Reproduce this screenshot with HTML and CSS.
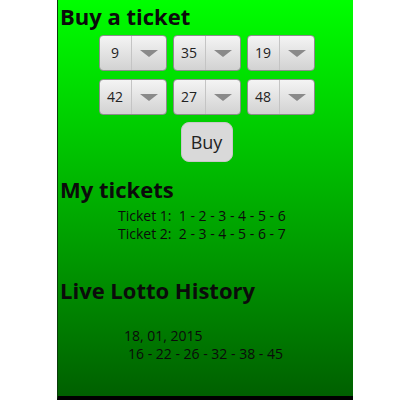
FILE: index.html
```html
<!DOCTYPE html>
<html>

<head>
    <title>Lotto</title>
    <link rel="stylesheet" href="styles.css">
</head>

<body>
    <div class="screen">
        <h2 class="section-title">Buy a ticket</h2>
        <div class="picker">
            <div class="spinner"><span class="value">9</span><span class="arrow"></span></div>
            <div class="spinner"><span class="value">35</span><span class="arrow"></span></div>
            <div class="spinner"><span class="value">19</span><span class="arrow"></span></div>
            <div class="spinner"><span class="value">42</span><span class="arrow"></span></div>
            <div class="spinner"><span class="value">27</span><span class="arrow"></span></div>
            <div class="spinner"><span class="value">48</span><span class="arrow"></span></div>
        </div>
        <div class="actions">
            <button class="buy">Buy</button>
        </div>

        <h2 class="section-title">My tickets</h2>
        <div class="tickets">
            <p>Ticket 1:&nbsp; 1 - 2 - 3 - 4 - 5 - 6</p>
            <p>Ticket 2:&nbsp; 2 - 3 - 4 - 5 - 6 - 7</p>
        </div>

        <h2 class="section-title history-title">Live Lotto History</h2>
        <div class="history">
            <p>18, 01, 2015</p>
            <p class="draw">16 - 22 - 26 - 32 - 38 - 45</p>
        </div>
    </div>
</body>

</html>
```
FILE: styles.css
```css
body {
    margin: 0;
    background-color: white;
    font-family: "Open Sans", "DejaVu Sans", sans-serif;
}

.screen {
    width: 293px;
    height: 396px;
    margin-left: 57px;
    padding-left: 2px;
    border-left: 1px solid #0a3a0a;
    border-bottom: 4px solid black;
    background: linear-gradient(#00ff00, #006000);
    color: #0b0b0b;
}

.section-title {
    margin: 0;
    font-size: 22px;
    line-height: 26px;
    font-weight: bold;
    padding-top: 3px;
}

.picker {
    display: grid;
    grid-template-columns: repeat(3, 68px);
    column-gap: 6px;
    row-gap: 8px;
    justify-content: center;
    margin-top: 6px;
}

.spinner {
    display: flex;
    height: 34px;
    border: 1px solid #8c8c8c;
    border-radius: 4px;
    background: linear-gradient(#f4f4f4, #d2d2d2);
}

.value {
    width: 31px;
    border-right: 1px solid #c4c4c4;
    font-size: 14px;
    line-height: 34px;
    text-align: center;
    color: #222;
}

.arrow {
    flex: 1;
    display: flex;
    align-items: center;
    justify-content: center;
}

.arrow::after {
    content: "";
    border-left: 9px solid transparent;
    border-right: 9px solid transparent;
    border-top: 7px solid #8a8a8a;
}

.actions {
    display: flex;
    justify-content: center;
    margin-top: 7px;
}

.buy {
    width: 52px;
    height: 40px;
    padding: 0;
    border: 1px solid #c8c8c8;
    border-radius: 8px;
    background-color: #d9d9d9;
    font-family: inherit;
    font-size: 18px;
    color: #222;
}

.section-title + .tickets,
.section-title + .history {
    margin-top: 5px;
}

.actions + .section-title {
    margin-top: 11px;
}

.tickets {
    padding-left: 58px;
}

.tickets p,
.history p {
    margin: 0;
    font-size: 14px;
    line-height: 18px;
}

.history-title {
    margin-top: 31px;
}

.history {
    padding-top: 19px;
    padding-left: 64px;
}

.history .draw {
    padding-left: 4px;
}
```
